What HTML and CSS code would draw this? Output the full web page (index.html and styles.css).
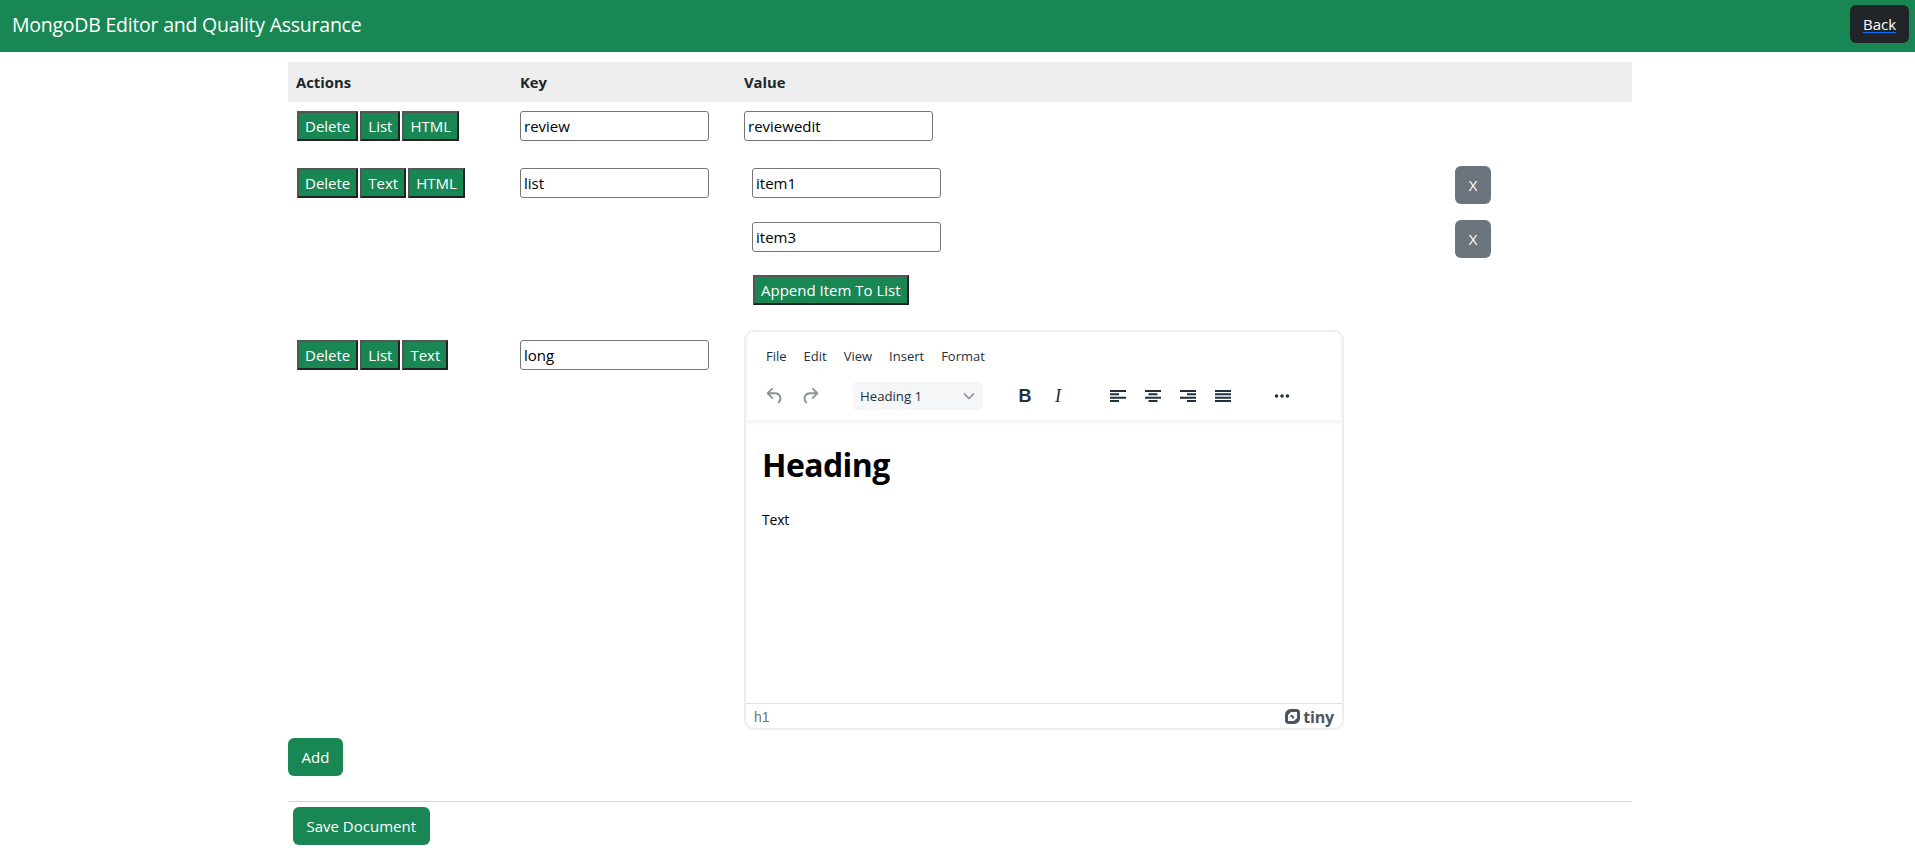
FILE: index.html
```html
<!DOCTYPE html>
<html lang="en">
<head>
<meta charset="utf-8">
<title>MongoDB Editor and Quality Assurance</title>
<link rel="stylesheet" href="styles.css">
</head>
<body>
<nav class="navbar">
  <span class="brand">MongoDB Editor and Quality Assurance</span>
  <a class="btn btn-dark" href="#">Back</a>
</nav>
<main class="container">
  <div class="row head">
    <div>Actions</div><div>Key</div><div>Value</div>
  </div>
  <div class="row r1">
    <div class="actions"><button class="mini">Delete</button><button class="mini">List</button><button class="mini">HTML</button></div>
    <div><input class="field" value="review"></div>
    <div><input class="field" value="reviewedit"></div>
  </div>
  <div class="row r2">
    <div class="actions"><button class="mini">Delete</button><button class="mini">Text</button><button class="mini">HTML</button></div>
    <div><input class="field" value="list"></div>
    <div class="list">
      <div class="item"><input class="field" value="item1"><button class="btn btn-grey">X</button></div>
      <div class="item"><input class="field" value="item3"><button class="btn btn-grey">X</button></div>
      <div class="append"><button class="mini">Append Item To List</button></div>
    </div>
  </div>
  <div class="row r3">
    <div class="actions"><button class="mini">Delete</button><button class="mini">List</button><button class="mini">Text</button></div>
    <div class="keycell"><input class="field" value="long"></div>
    <div class="editor">
      <div class="header">
        <div class="menubar"><span>File</span><span>Edit</span><span>View</span><span>Insert</span><span>Format</span></div>
        <div class="toolbar">
          <svg class="ic undo" viewBox="0 0 24 24"><path d="M6.400 8H12c3.700 0 6.200 2 6.800 5.100.6 2.700-.4 5.600-2.400 6.900h-.1a1 1 0 0 1-1.200-1.500c1.300-1.100 2-3 1.700-4.900-.4-2-2-3.200-4.800-3.600H6.400l3.300 3.300a1 1 0 1 1-1.400 1.400l-5-5a1 1 0 0 1 0-1.400l5-5a1 1 0 0 1 1.400 1.400L6.400 8Z"/></svg>
          <svg class="ic redo" viewBox="0 0 24 24"><path d="M17.600 8H12c-3.700 0-6.200 2-6.800 5.100-.6 2.700.4 5.600 2.400 6.900h.1a1 1 0 0 0 1.200-1.500c-1.300-1.100-2-3-1.700-4.900.4-2 2-3.200 4.800-3.600h5.600l-3.300 3.300a1 1 0 1 0 1.400 1.400l5-5a1 1 0 0 0 0-1.400l-5-5a1 1 0 0 0-1.400 1.400L17.600 8Z"/></svg>
          <div class="select"><span>Heading 1</span><svg class="chev" viewBox="0 0 10 10"><path d="M0 2.500 5 7.500 10 2.500"/></svg></div>
          <span class="bold">B</span>
          <span class="ital">I</span>
          <svg class="ic al first" viewBox="0 0 16 12"><path d="M0 0h16v2H0zM0 3.300h9v2H0zM0 6.700h16v2H0zM0 10h9v2H0z"/></svg>
          <svg class="ic al" viewBox="0 0 16 12"><path d="M0 0h16v2H0zM3.500 3.300h9v2h-9zM0 6.700h16v2H0zM3.500 10h9v2h-9z"/></svg>
          <svg class="ic al" viewBox="0 0 16 12"><path d="M0 0h16v2H0zM7 3.300h9v2H7zM0 6.700h16v2H0zM7 10h9v2H7z"/></svg>
          <svg class="ic al" viewBox="0 0 16 12"><path d="M0 0h16v2H0zM0 3.300h16v2H0zM0 6.700h16v2H0zM0 10h16v2H0z"/></svg>
          <svg class="ic more" viewBox="0 0 16 4"><circle cx="2.500" cy="2" r="1.800"/><circle cx="8" cy="2" r="1.800"/><circle cx="13.500" cy="2" r="1.800"/></svg>
        </div>
      </div>
      <div class="content">
        <h1>Heading</h1>
        <p>Text</p>
      </div>
      <div class="statusbar">
        <span class="path">h1</span>
        <span class="logo"><svg viewBox="0 0 16 16"><path fill-rule="evenodd" d="M6 0h6a4 4 0 0 1 4 4v6a6 6 0 0 1-6 6H4a4 4 0 0 1-4-4V6a6 6 0 0 1 6-6ZM6.500 3.200 3.200 6.500v6.300H9.500l3.300-3.300V3.200H6.500Z"/><path d="M5.800 6.300h2.400v1.500H9.800v2.200H7.400V8.500H5.800Z"/></svg><b>tiny</b></span>
      </div>
    </div>
  </div>
  <div class="add-row"><button class="btn btn-green">Add</button></div>
  <hr class="rule">
  <div class="save-row"><button class="btn btn-green">Save Document</button></div>
</main>
</body>
</html>
```

FILE: styles.css
```css
* { box-sizing: border-box; }
html, body { margin: 0; padding: 0; }
body {
  font-family: "Open Sans", "Noto Sans", "Liberation Sans", sans-serif;
  font-size: 15px;
  color: #212529;
  background: #fff;
  height: 857px;
  overflow: hidden;
}
.navbar {
  height: 52px;
  background: #198754;
  display: flex;
  align-items: center;
  justify-content: space-between;
  padding: 0 6px 4px 12px;
}
.brand { color: #fff; font-size: 19.5px; letter-spacing: -0.24px; }
.btn {
  display: inline-flex;
  align-items: center;
  justify-content: center;
  height: 38px;
  border: 0;
  border-radius: 6px;
  color: #fff;
  font: inherit;
  padding: 0 13.5px;
}
.btn-dark { background: #212529; width: 59px; padding: 0; text-decoration: underline; text-decoration-color: #0d6efd; text-underline-offset: 2px; }
.btn-grey { background: #6c757d; width: 36px; padding: 0; margin-left: 514px; margin-top: -2px; align-self: flex-start; }
.btn-green { background: #198754; }
.container { width: 1344px; margin-left: 288px; padding-top: 10px; }
.row { display: grid; grid-template-columns: 232px 224px 1fr; }
.head { height: 40px; background: #eee; align-items: center; font-weight: 700; font-size: 14.8px; padding-left: 8px; grid-template-columns: 224px 224px 1fr; }
.r1 { padding-top: 9px; height: 66px; }
.r2 { height: 163px; }
.r3 { height: 407px; }
.actions { display: flex; align-items: flex-start; gap: 2px; padding-left: 9px; }
.r3 .actions, .keycell { padding-top: 9px; }
.mini {
  height: 30px;
  padding: 0 6px;
  background: #198754;
  color: #fff;
  font: inherit;
  border: 2px solid;
  border-color: #555 #222 #222 #555;
  white-space: nowrap;
}
.field {
  display: block;
  width: 189px;
  height: 30px;
  padding: 1px 3px;
  border: 1px solid #767676;
  border-radius: 3px;
  font: inherit;
  color: #000;
  background: #fff;
}
.list { padding-left: 8px; }
.item { display: flex; align-items: center; height: 30px; margin-bottom: 24px; }
.append { margin-top: -1px; padding-left: 1px; }
.editor {
  width: 600px;
  height: 400px;
  border: 2px solid #eee;
  border-radius: 10px;
  display: flex;
  flex-direction: column;
  margin-top: -1px;
  overflow: hidden;
}
.header { height: 88px; flex: none; box-shadow: 0 2px 4px rgba(34,47,62,.08); position: relative; margin: 0 2px; }
.menubar { display: flex; gap: 17px; padding: 16px 0 0 18px; font-size: 13px; line-height: 17px; color: #222f3e; }
.toolbar { display: flex; align-items: center; padding-left: 16px; margin-top: 17px; height: 28px; }
.ic { display: block; flex: none; }
.undo, .redo { width: 22px; height: 22px; fill: #8b939b; }
.redo { margin-left: 13px; }
.select { width: 130px; height: 28px; margin-left: 32px; background: #f5f6f7; border-radius: 4px; display: flex; align-items: center; justify-content: space-between; padding: 0 9px 0 7px; font-size: 13.2px; color: #222f3e; }
.chev { width: 10px; height: 10px; fill: none; stroke: #7e8790; stroke-width: 1.500; }
.bold { width: 20px; margin-left: 32px; text-align: center; font: 700 18px "Liberation Sans", sans-serif; color: #222f3e; }
.ital { width: 20px; margin-left: 13px; text-align: center; font: italic 18px "Liberation Serif", serif; color: #222f3e; }
.al { width: 16px; height: 12px; fill: #222f3e; margin-left: 19px; }
.al.first { margin-left: 42px; }
.more { width: 16px; height: 4px; fill: #222f3e; margin-left: 43px; }
.content { flex: 1; padding: 0 16px; color: #000; min-height: 0; }
.content h1 { font-size: 32px; line-height: 42px; font-weight: 700; margin: 24px 0 0; letter-spacing: -0.6px; }
.content p { margin: 24px 0 0; line-height: 20px; font-size: 14px; letter-spacing: -0.2px; }
.statusbar { flex: none; height: 25px; border-top: 1px solid #e3e3e3; display: flex; align-items: center; justify-content: space-between; padding: 1px 8px 0 8px; font-size: 14px; color: #6b7480; }
.path { font-family: "Liberation Sans", sans-serif; }
.logo { display: inline-flex; align-items: center; gap: 3px; color: #4b5560; }
.logo svg { width: 15px; height: 15px; fill: #4b5560; }
.logo b { font-size: 16px; line-height: 18px; font-weight: 700; letter-spacing: -0.2px; }
.rule { margin: 25px 0 5px; border: 0; border-top: 1px solid #d5d5d5; height: 0; }
.save-row { padding-left: 5px; }
```
